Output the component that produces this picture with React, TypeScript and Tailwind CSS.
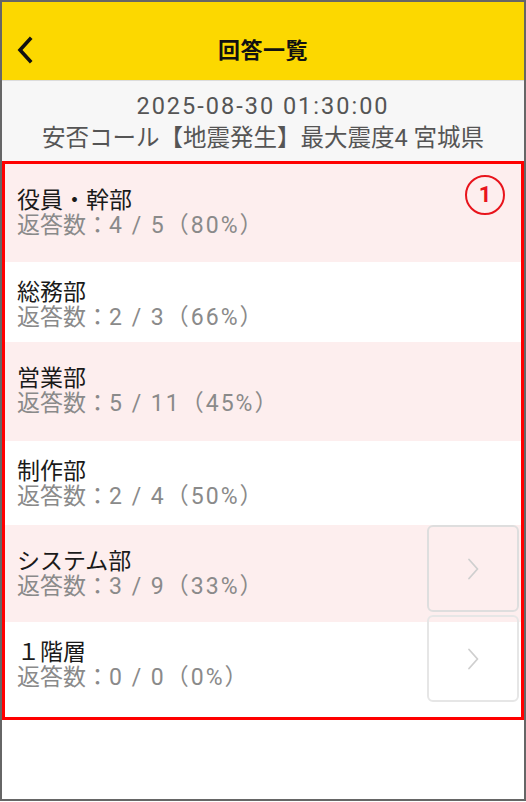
import React from 'react';

type Row = {
  name: string;
  answered: number;
  total: number;
  pct: number;
  pink: boolean;
  height: string;
  pad: string;
};

const rows: Row[] = [
  { name: '役員・幹部', answered: 4, total: 5, pct: 80, pink: true, height: 'h-[98px]', pad: 'pt-[24px]' },
  { name: '総務部', answered: 2, total: 3, pct: 66, pink: false, height: 'h-[80px]', pad: 'pt-[18px]' },
  { name: '営業部', answered: 5, total: 11, pct: 45, pink: true, height: 'h-[99px]', pad: 'pt-[24px]' },
  { name: '制作部', answered: 2, total: 4, pct: 50, pink: false, height: 'h-[84px]', pad: 'pt-[18px]' },
  { name: 'システム部', answered: 3, total: 9, pct: 33, pink: true, height: 'h-[97px]', pad: 'pt-[24px]' },
  { name: '１階層', answered: 0, total: 0, pct: 0, pink: false, height: 'h-[95px]', pad: 'pt-[18px]' },
];

const Chevron = () => (
  <svg width="12" height="22" viewBox="0 0 12 22" fill="none">
    <path d="M2 1.5 L10.5 11 L2 20.5" stroke="#cfcfcf" strokeWidth="1.8" strokeLinecap="round" strokeLinejoin="round" />
  </svg>
);

export default function App() {
  return (
    <div className="w-[526px] h-[802px] bg-white font-['Roboto','Noto_Sans_CJK_JP',sans-serif]">
      <div className="h-[801px] border-2 border-[#666] flex flex-col overflow-hidden">
        <header className="relative h-[78px] shrink-0 bg-[#FCD800] pt-[18px] flex items-center justify-center">
          <svg className="absolute left-[13px] top-[34px]" width="20" height="28" viewBox="0 0 20 28" fill="none">
            <path d="M15 3 L5 14 L15 25" stroke="#111" strokeWidth="3.6" strokeLinecap="square" />
          </svg>
          <h1 className="text-[22px] font-bold text-[#111] tracking-[0.5px]">回答一覧</h1>
        </header>
        <div className="h-[81px] shrink-0 bg-[#f7f7f7] border-t border-[#dcdcdc] pt-[9px] text-center text-[23.5px] leading-[32px] text-[#555]">
          <div className="tracking-[2px]">2025-08-30 01:30:00</div>
          <div>安否コール【地震発生】最大震度4 宮城県</div>
        </div>
        <div className="relative border-[3px] border-[#ff0000] flex flex-col">
          {rows.map((r, i) => (
            <div
              key={i}
              className={`${r.height} ${r.pad} pl-[12px] pr-[16px] flex items-start justify-between ${r.pink ? 'bg-[#fdeeee]' : 'bg-white'}`}
            >
              <div className="leading-[25px] text-[23px]">
                <div className="text-[#1a1a1a]">{r.name}</div>
                <div className="text-[#8a8a8a]">
                  返答数：<span className="tracking-[2px]">{r.answered} / {r.total}（{r.pct}%</span>）
                </div>
              </div>
              {i === 0 && (
                <div className="mt-[-13px] w-[40px] h-[40px] rounded-full border-2 border-[#e8141c] flex items-center justify-center text-[22px] font-bold text-[#e8141c] leading-none">
                  1
                </div>
              )}
            </div>
          ))}
          <div className="absolute top-[361px] right-[2px] flex flex-col gap-[3px]">
            <div className="w-[92px] h-[87px] rounded-[6px] border-2 border-[#dedede] flex items-center justify-center">
              <Chevron />
            </div>
            <div className="w-[92px] h-[87px] rounded-[6px] border-2 border-[#e6e6e6] flex items-center justify-center">
              <Chevron />
            </div>
          </div>
        </div>
      </div>
    </div>
  );
}
